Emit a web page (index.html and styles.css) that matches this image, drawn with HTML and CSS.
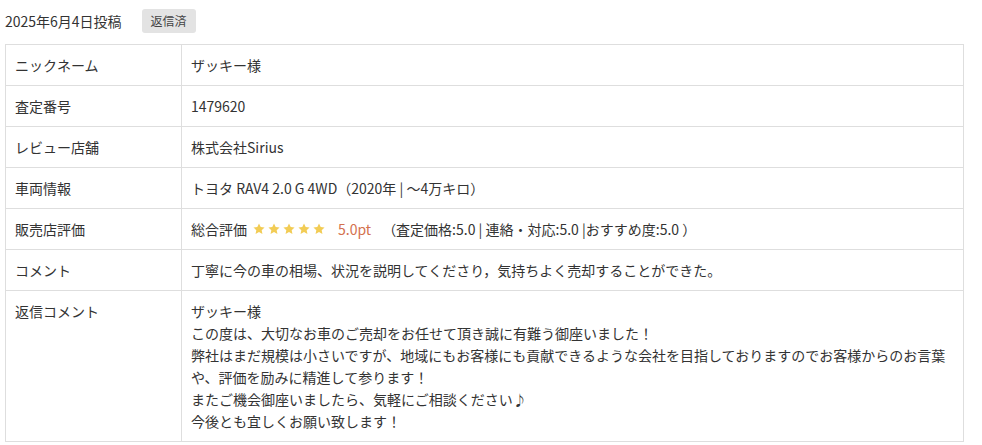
FILE: index.html
```html
<!DOCTYPE html>
<html lang="ja">
<head>
<meta charset="utf-8">
<link rel="stylesheet" href="styles.css">
</head>
<body>
<div class="review">
  <div class="head">
    <span class="date">2025年6月4日投稿</span>
    <span class="badge">返信済</span>
  </div>
  <table class="info">
    <tr><th>ニックネーム</th><td>ザッキー様</td></tr>
    <tr><th>査定番号</th><td>1479620</td></tr>
    <tr><th>レビュー店舗</th><td>株式会社Sirius</td></tr>
    <tr><th>車両情報</th><td>トヨタ RAV4 2.0 G 4WD（2020年 | ～4万キロ）</td></tr>
    <tr><th>販売店評価</th><td><span class="score">総合評価<span class="stars"><svg viewBox="0 0 24 24"><path d="M12 2.5l2.9 6.1 6.6.8-4.9 4.6 1.3 6.6L12 17.3l-5.9 3.3 1.3-6.6-4.9-4.6 6.6-.8z"/></svg><svg viewBox="0 0 24 24"><path d="M12 2.5l2.9 6.1 6.6.8-4.9 4.6 1.3 6.6L12 17.3l-5.9 3.3 1.3-6.6-4.9-4.6 6.6-.8z"/></svg><svg viewBox="0 0 24 24"><path d="M12 2.5l2.9 6.1 6.6.8-4.9 4.6 1.3 6.6L12 17.3l-5.9 3.3 1.3-6.6-4.9-4.6 6.6-.8z"/></svg><svg viewBox="0 0 24 24"><path d="M12 2.5l2.9 6.1 6.6.8-4.9 4.6 1.3 6.6L12 17.3l-5.9 3.3 1.3-6.6-4.9-4.6 6.6-.8z"/></svg><svg viewBox="0 0 24 24"><path d="M12 2.5l2.9 6.1 6.6.8-4.9 4.6 1.3 6.6L12 17.3l-5.9 3.3 1.3-6.6-4.9-4.6 6.6-.8z"/></svg></span><span class="pt">5.0pt</span><span class="detail">（査定価格:5.0 | 連絡・対応:5.0 |おすすめ度:5.0 ）</span></span></td></tr>
    <tr><th>コメント</th><td>丁寧に今の車の相場、状況を説明してくださり，気持ちよく売却することができた。</td></tr>
    <tr><th>返信コメント</th><td>ザッキー様<br>この度は、大切なお車のご売却をお任せて頂き誠に有難う御座いました！<br>弊社はまだ規模は小さいですが、地域にもお客様にも貢献できるような会社を目指しておりますのでお客様からのお言葉や、評価を励みに精進して参ります！<br>またご機会御座いましたら、気軽にご相談ください♪<br>今後とも宜しくお願い致します！</td></tr>
  </table>
</div>
</body>
</html>
```
FILE: styles.css
```css
html, body {
  margin: 0;
  padding: 0;
  background: #fff;
}
body {
  font-family: "Noto Sans CJK JP", "Noto Sans", sans-serif;
  color: #333;
  font-size: 14px;
}
.review {
  padding: 9px 0 0 5px;
  width: 959px;
}
.head {
  display: flex;
  align-items: center;
  height: 24px;
  margin-bottom: 11px;
}
.date {
  font-size: 14px;
  line-height: 24px;
}
.badge {
  margin-left: 20px;
  width: 54px;
  height: 24px;
  line-height: 24px;
  text-align: center;
  background: #e3e3e3;
  border-radius: 3px;
  font-size: 12px;
  color: #444;
}
.info {
  width: 959px;
  border-collapse: collapse;
  table-layout: fixed;
}
.info th, .info td {
  border: 1px solid #dedede;
  padding: 9px 10px 9px 9px;
  text-align: left;
  vertical-align: top;
  font-weight: normal;
  line-height: 22px;
  font-size: 14px;
}
.info th {
  width: 156px;
}
.score {
  display: inline-flex;
  align-items: center;
}
.stars {
  display: inline-flex;
  margin-left: 5px;
  gap: 1px;
}
.stars svg {
  width: 14px;
  height: 14px;
  fill: #f2cc55;
}
.pt {
  margin-left: 12px;
  color: #d3714e;
}
.detail {
  margin-left: 11px;
}
```
